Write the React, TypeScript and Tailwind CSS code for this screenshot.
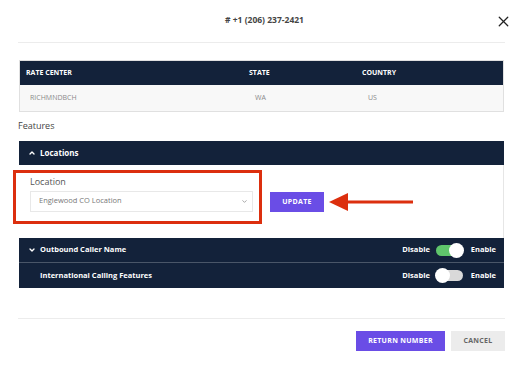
import { ChevronDown, ChevronUp, X } from "lucide-react";

const Toggle = ({ on }: { on: boolean }) => {
  return (
    <div className="flex items-center gap-[6px] text-[7.5px] font-bold text-white">
      <span>Disable</span>
      <div
        className={`relative h-[11px] w-[27px] rounded-full ${
          on ? "bg-[#5fc56b]" : "bg-[#d9d9d9]"
        }`}
      >
        <div
          className={`absolute top-[-2px] h-[15px] w-[15px] rounded-full bg-white ${
            on ? "right-[-1px]" : "left-[-1px]"
          }`}
        />
      </div>
      <span className="ml-[2px]">Enable</span>
    </div>
  );
};

const App = () => {
  return (
    <div className="relative h-[367px] w-[529px] bg-white font-['Open_Sans',sans-serif] text-[#333]">
      <div className="ml-[18px] w-[487px]">
        {/* header */}
        <div className="relative flex h-[43px] items-center justify-center border-b border-[#ececec]">
          <h1 className="mt-[-1px] pl-[6px] text-[8.5px] font-bold text-[#444]">
            # +1 (206) 237-2421
          </h1>
          <X className="absolute right-[-7px] top-[13px] h-[17px] w-[17px] text-[#222]" strokeWidth={1.8} />
        </div>

        {/* rate center table */}
        <div className="ml-[1px] mt-[17px] w-[485px] border border-[#e0e0e0]">
          <div className="grid h-[24px] grid-cols-[223px_113px_1fr] items-center bg-[#13223a] pl-[6px] text-[7px] font-bold text-white">
            <span>RATE CENTER</span>
            <span>STATE</span>
            <span>COUNTRY</span>
          </div>
          <div className="grid h-[26px] grid-cols-[223px_115px_1fr] items-center bg-[#f8f8f8] pl-[10px] text-[7px] text-[#8a8a8a]">
            <span>RICHMNDBCH</span>
            <span className="pl-[2px]">WA</span>
            <span>US</span>
          </div>
        </div>

        <p className="mt-[7px] h-[22px] text-[9px] text-[#444]">Features</p>

        {/* features accordion */}
        <div className="ml-[1px] w-[485px]">
          <div className="flex h-[24px] items-center gap-[4px] bg-[#13223a] pl-[9px] text-[8px] font-bold text-white">
            <ChevronUp className="h-[8px] w-[8px]" strokeWidth={4} />
            <span>Locations</span>
          </div>
          <div className="flex h-[73px] items-start gap-[17px] border-r border-[#e6e6e6] pl-[11px] pt-[10px]">
            <div className="w-[223px]">
              <label className="block text-[9px] text-[#555]">Location</label>
              <div className="mt-[2px] flex h-[21px] items-center justify-between border border-[#e8e8e8] pl-[8px] pr-[4px] text-[7.5px] text-[#777]">
                <span>Englewood CO Location</span>
                <ChevronDown className="h-[7px] w-[7px] text-[#888]" strokeWidth={2.5} />
              </div>
            </div>
            <button className="mt-[17px] h-[20px] w-[54px] bg-[#6a4de6] text-[7px] font-bold tracking-[0.3px] text-white">
              UPDATE
            </button>
          </div>
          <div className="bg-[#13223a] text-[7.5px] font-bold text-white">
            <div className="flex h-[25px] items-center justify-between border-b border-[#4a5668] pl-[9px] pr-[8px]">
              <div className="flex items-center gap-[4px]">
                <ChevronDown className="h-[8px] w-[8px]" strokeWidth={4} />
                <span>Outbound Caller Name</span>
              </div>
              <Toggle on />
            </div>
            <div className="flex h-[25px] items-center justify-between pl-[21px] pr-[8px]">
              <span>International Calling Features</span>
              <Toggle on={false} />
            </div>
          </div>
        </div>

        {/* footer */}
        <div className="mt-[30px] flex justify-end gap-[6px] border-t border-[#ececec] pt-[12px]">
          <button className="h-[20px] w-[89px] bg-[#6a4de6] text-[7px] font-bold tracking-[0.3px] text-white">
            RETURN NUMBER
          </button>
          <button className="h-[20px] w-[54px] bg-[#ececec] text-[7px] font-bold tracking-[0.3px] text-[#666]">
            CANCEL
          </button>
        </div>
      </div>

      {/* annotation: red box */}
      <div className="pointer-events-none absolute left-[13px] top-[170px] h-[54px] w-[249px] border-[3px] border-[#dc2f0e]" />
      {/* annotation: red arrow */}
      <svg className="pointer-events-none absolute left-[329px] top-[192px]" width="84" height="20" viewBox="0 0 84 20">
        <line x1="16" y1="10" x2="84" y2="10" stroke="#dc2f0e" strokeWidth="3" />
        <polygon points="0,10 19,1 19,19" fill="#dc2f0e" />
      </svg>
    </div>
  );
};

export default App;
